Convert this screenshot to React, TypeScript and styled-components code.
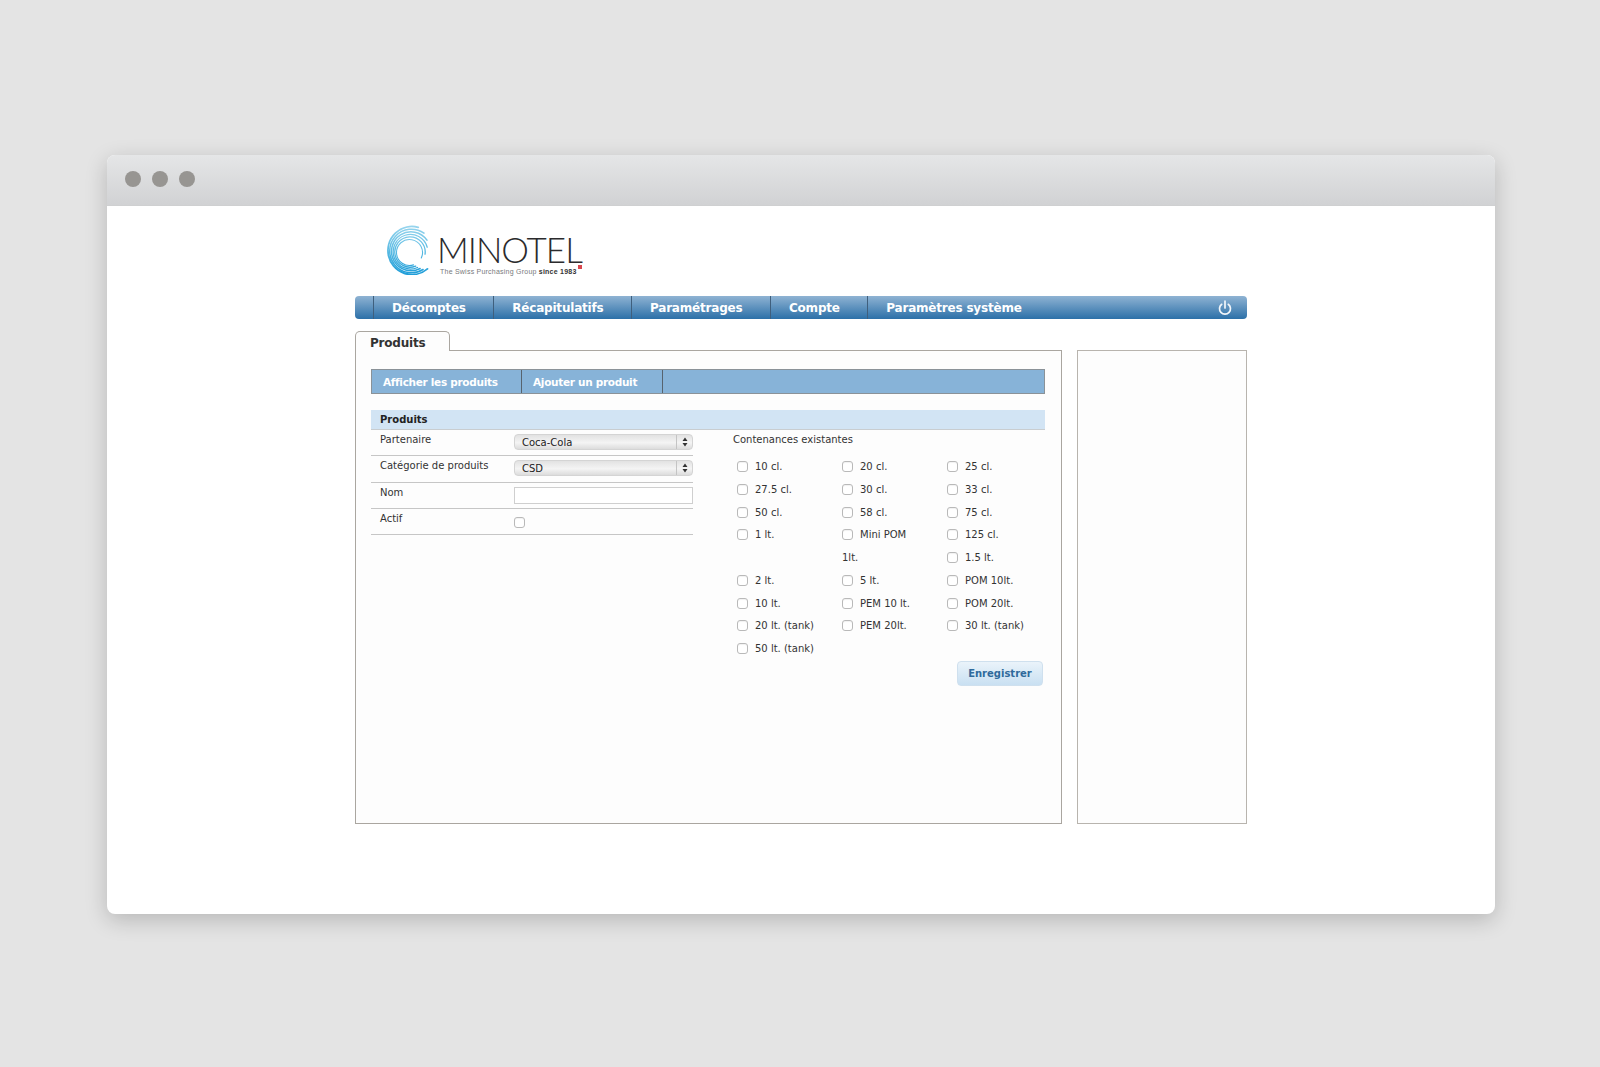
import { FunctionComponent } from "react"
import styled, { createGlobalStyle } from "styled-components"

const GlobalStyle = createGlobalStyle`
  html, body {
    margin: 0;
    padding: 0;
    background-color: #e4e4e4;
    font-family: "DejaVu Sans", "Liberation Sans", sans-serif;
    color: #333;
  }
`

const Stage = styled.div`
  width: 1600px;
  height: 1067px;
  padding: 155px 0 0 107px;
  box-sizing: border-box;
  overflow: hidden;
`

const BrowserWindow = styled.div`
  width: 1388px;
  height: 759px;
  background-color: #fff;
  border-radius: 8px;
  box-shadow: 0 6px 22px rgba(0, 0, 0, 0.2);
  overflow: hidden;
`

const TitleBar = styled.div`
  height: 51px;
  box-sizing: border-box;
  display: flex;
  align-items: center;
  gap: 11px;
  padding: 0 0 2px 18px;
  background: linear-gradient(#e5e6e7, #d1d2d4);
  border-bottom: 1px solid #cfd0d1;
`

const Dot = styled.span`
  width: 16px;
  height: 16px;
  border-radius: 50%;
  background-color: #979592;
`

const Page = styled.div`
  width: 892px;
  margin-left: 248px;
`

const Header = styled.div`
  height: 90px;
  box-sizing: border-box;
  padding: 19px 0 0 31px;
  display: flex;
  gap: 7px;
`

const LogoText = styled.div`
  display: flex;
  flex-direction: column;
  padding-top: 9px;
`

const LogoName = styled.div`
  font-family: Lato, "Liberation Sans", sans-serif;
  font-weight: 300;
  font-size: 35px;
  line-height: 30px;
  letter-spacing: -1px;
  color: #2b2b2d;
`

const LogoTag = styled.div`
  display: flex;
  align-items: flex-start;
  font-family: "Liberation Sans", sans-serif;
  font-size: 7px;
  line-height: 9px;
  margin: 3px 0 0 3px;
  letter-spacing: 0.23px;
  white-space: pre;
  color: #77797c;

  b {
    color: #333;
  }
`

const RedSquare = styled.i`
  width: 4px;
  height: 4px;
  margin: -2px 0 0 1px;
  background-color: #d9464f;
`

const MainNav = styled.nav`
  height: 23px;
  display: flex;
  align-items: stretch;
  padding-left: 18px;
  border-radius: 4px;
  background: linear-gradient(#8fb3d3, #2c70a8);
`

const MainNavItem = styled.a`
  display: flex;
  align-items: center;
  padding: 0 27.5px 0 18px;
  border-left: 1px solid #3f5f7d;
  color: #fff;
  font-size: 12px;
  letter-spacing: -0.2px;
  font-weight: 700;
  white-space: nowrap;

  &:last-of-type {
    border-left: 1px solid #3f5f7d;
  }
`

const PowerButton = styled.span`
  margin-left: auto;
  margin-right: 15px;
  display: flex;
  align-items: center;
`

const TabStrip = styled.div`
  height: 31px;
  display: flex;
  align-items: flex-end;
`

const Tab = styled.div`
  width: 95px;
  height: 20px;
  box-sizing: border-box;
  padding: 3px 0 0 14px;
  margin-bottom: -1px;
  position: relative;
  background-color: #fdfdfd;
  border: 1px solid #aaa6a0;
  border-bottom: 0;
  border-radius: 5px 5px 0 0;
  font-size: 12px;
  letter-spacing: -0.2px;
  font-weight: 700;
  line-height: 17px;
`

const Panels = styled.div`
  display: flex;
  gap: 15px;
  height: 474px;
`

const MainPanel = styled.section`
  width: 707px;
  box-sizing: border-box;
  padding: 18px 16px 18px 15px;
  background-color: #fdfdfd;
  border: 1px solid #aaa6a0;
`

const SidePanel = styled.aside`
  width: 170px;
  box-sizing: border-box;
  background-color: #fdfdfd;
  border: 1px solid #b8b4ae;
`

const SubNav = styled.div`
  height: 25px;
  box-sizing: border-box;
  display: flex;
  background-color: #87b3d8;
  border: 1px solid #8a9298;
`

const SubNavItem = styled.a<{ $width: number }>`
  width: ${(p) => p.$width}px;
  box-sizing: border-box;
  padding-left: 11px;
  border-right: 1px solid #57636e;
  color: #fff;
  font-size: 10.5px;
  letter-spacing: -0.3px;
  font-weight: 700;
  line-height: 24px;
  white-space: nowrap;
`

const SectionTitle = styled.h2`
  margin: 16px 0 0;
  height: 20px;
  box-sizing: border-box;
  padding-left: 9px;
  background-color: #d2e4f4;
  border-bottom: 1px solid #c9cdd0;
  font-size: 10px;
  font-weight: 700;
  line-height: 19px;
  color: #222;
`

const FormColumns = styled.div`
  display: flex;
  gap: 40px;
`

const FieldList = styled.div`
  width: 322px;
  flex: none;
`

const FieldRow = styled.div`
  height: 26.3px;
  box-sizing: border-box;
  padding-top: 4px;
  display: grid;
  grid-template-columns: 143px 1fr;
  border-bottom: 1px solid #c6c6c6;
`

const FieldLabel = styled.label`
  padding-left: 9px;
  font-size: 10px;
  line-height: 11px;
`

const SelectBox = styled.div`
  height: 16px;
  box-sizing: border-box;
  display: flex;
  align-items: center;
  justify-content: space-between;
  padding-left: 7px;
  border-radius: 4px;
  background: linear-gradient(#e2e2e2, #f4f4f4 55%, #dcdcdc);
  border: 1px solid #d4d4d4;
  font-size: 10px;
  color: #222;
`

const SelectArrows = styled.span`
  width: 15px;
  height: 100%;
  display: flex;
  align-items: center;
  justify-content: center;
  border-left: 1px solid #c4c4c4;
`

const TextInput = styled.input`
  height: 17px;
  width: 100%;
  box-sizing: border-box;
  padding: 0;
  background-color: #fff;
  border: 1px solid #cfcfcf;
  outline: 0;
`

const CheckBox = styled.input.attrs({ type: "checkbox" })`
  appearance: none;
  width: 11px;
  height: 11px;
  margin: 0;
  background-color: #fff;
  border: 1px solid #b9b9b9;
  border-radius: 3px;
  box-shadow: inset 0 1px 1px rgba(0, 0, 0, 0.06);
`

const ActiveCheck = styled(CheckBox)`
  margin-top: 3px;
`

const Capacities = styled.div`
  flex: 1;
  min-width: 0;
  padding-top: 3px;
`

const CapacitiesTitle = styled.div`
  font-size: 10px;
  line-height: 13px;
`

const CapacityGrid = styled.div`
  display: grid;
  grid-template-columns: 105px 105px 1fr;
  grid-auto-rows: 22.75px;
  margin: 10px 0 0 4px;
`

const CapacityItem = styled.label<{ $tall?: boolean; $column?: number }>`
  font-size: 10px;
  line-height: 22.75px;
  white-space: nowrap;
  ${(p) => (p.$tall ? "grid-row: span 2;" : "")}
  ${(p) => (p.$column ? `grid-column: ${p.$column};` : "")}

  input {
    vertical-align: -2px;
    margin-right: 7px;
  }
`

const FormActions = styled.div`
  display: flex;
  justify-content: flex-end;
  padding: 0 2px 0 0;
`

const SaveButton = styled.button`
  width: 86px;
  height: 25px;
  padding: 0;
  border-radius: 4px;
  border: 1px solid #cfe0ee;
  background: linear-gradient(#eaf3fa, #c9e0f2);
  color: #2f6a9c;
  font-family: inherit;
  font-size: 10px;
  font-weight: 700;
`

const topLinks = ["Décomptes", "Récapitulatifs", "Paramétrages", "Compte", "Paramètres système"]

const capacities: { name: string; second?: string; column?: number }[] = [
  { name: "10 cl." },
  { name: "20 cl." },
  { name: "25 cl." },
  { name: "27.5 cl." },
  { name: "30 cl." },
  { name: "33 cl." },
  { name: "50 cl." },
  { name: "58 cl." },
  { name: "75 cl." },
  { name: "1 lt." },
  { name: "Mini POM", second: "1lt." },
  { name: "125 cl." },
  { name: "1.5 lt.", column: 3 },
  { name: "2 lt." },
  { name: "5 lt." },
  { name: "POM 10lt." },
  { name: "10 lt." },
  { name: "PEM 10 lt." },
  { name: "POM 20lt." },
  { name: "20 lt. (tank)" },
  { name: "PEM 20lt." },
  { name: "30 lt. (tank)" },
  { name: "50 lt. (tank)" },
]

// [radius, centre x, centre y, start angle, end angle, stroke]
const swirlArcs = [
  [24, 26, 25.5, 50, 285, 1.9],
  [21.8, 25.5, 26, 58, 305, 1.5],
  [19.5, 25, 26.3, 62, 325, 1.5],
  [17.3, 24.5, 26.7, 66, 345, 1.3],
  [15.2, 24, 27, 68, 368, 1.3],
  [13, 23.5, 27.5, 72, 385, 1.1],
]

const arcPath = (r: number, cx: number, cy: number, from: number, to: number) => {
  const point = (deg: number) => {
    const a = (deg * Math.PI) / 180
    return `${(cx + r * Math.cos(a)).toFixed(2)} ${(cy + r * Math.sin(a)).toFixed(2)}`
  }
  return `M${point(from)}A${r} ${r} 0 ${to - from > 180 ? 1 : 0} 1 ${point(to)}`
}

const Swirl: FunctionComponent = () => (
  <svg width="44" height="50" viewBox="0 0 44 50" fill="none" strokeLinecap="round">
    <defs>
      <linearGradient id="swirlBlue" gradientUnits="userSpaceOnUse" x1="0" y1="0" x2="0" y2="50">
        <stop offset="0" stopColor="#9ad6ee" />
        <stop offset="0.5" stopColor="#5bbbe3" />
        <stop offset="1" stopColor="#1f9dd8" />
      </linearGradient>
    </defs>
    {swirlArcs.map(([r, cx, cy, from, to, w]) => (
      <path key={r} d={arcPath(r, cx, cy, from, to)} stroke="url(#swirlBlue)" strokeWidth={w} />
    ))}
  </svg>
)

const PowerGlyph: FunctionComponent = () => (
  <svg width="14" height="16" viewBox="0 0 14 16" fill="none" stroke="#f2f6fa" strokeWidth="1.7" strokeLinecap="round">
    <path d="M7 1v7" />
    <path d="M3.700 4.300a5.500 5.500 0 1 0 6.600 0" />
  </svg>
)

const UpDownArrows: FunctionComponent = () => (
  <svg width="6" height="10" viewBox="0 0 6 10" fill="#333">
    <path d="M3 0.500 5.500 4H.5zM3 9.500.5 6h5z" />
  </svg>
)

const App: FunctionComponent = () => {
  return (
    <Stage>
      <GlobalStyle />
      <BrowserWindow>
        <TitleBar>
          <Dot />
          <Dot />
          <Dot />
        </TitleBar>
        <Page>
          <Header>
            <Swirl />
            <LogoText>
              <LogoName>MINOTEL</LogoName>
              <LogoTag>
                The Swiss Purchasing Group <b>since 1983</b>
                <RedSquare />
              </LogoTag>
            </LogoText>
          </Header>
          <MainNav>
            {topLinks.map((link) => (
              <MainNavItem key={link}>{link}</MainNavItem>
            ))}
            <PowerButton>
              <PowerGlyph />
            </PowerButton>
          </MainNav>
          <TabStrip>
            <Tab>Produits</Tab>
          </TabStrip>
          <Panels>
            <MainPanel>
              <SubNav>
                <SubNavItem $width={150}>Afficher les produits</SubNavItem>
                <SubNavItem $width={141}>Ajouter un produit</SubNavItem>
              </SubNav>
              <SectionTitle>Produits</SectionTitle>
              <FormColumns>
                <FieldList>
                  <FieldRow>
                    <FieldLabel>Partenaire</FieldLabel>
                    <SelectBox>
                      Coca-Cola
                      <SelectArrows>
                        <UpDownArrows />
                      </SelectArrows>
                    </SelectBox>
                  </FieldRow>
                  <FieldRow>
                    <FieldLabel>Catégorie de produits</FieldLabel>
                    <SelectBox>
                      CSD
                      <SelectArrows>
                        <UpDownArrows />
                      </SelectArrows>
                    </SelectBox>
                  </FieldRow>
                  <FieldRow>
                    <FieldLabel>Nom</FieldLabel>
                    <TextInput />
                  </FieldRow>
                  <FieldRow>
                    <FieldLabel>Actif</FieldLabel>
                    <div>
                      <ActiveCheck />
                    </div>
                  </FieldRow>
                </FieldList>
                <Capacities>
                  <CapacitiesTitle>Contenances existantes</CapacitiesTitle>
                  <CapacityGrid>
                    {capacities.map((c) => (
                      <CapacityItem key={c.name} $tall={!!c.second} $column={c.column}>
                        <CheckBox />
                        {c.name}
                        {c.second && <br />}
                        {c.second}
                      </CapacityItem>
                    ))}
                  </CapacityGrid>
                  <FormActions>
                    <SaveButton>Enregistrer</SaveButton>
                  </FormActions>
                </Capacities>
              </FormColumns>
            </MainPanel>
            <SidePanel />
          </Panels>
        </Page>
      </BrowserWindow>
    </Stage>
  )
}

export default App
